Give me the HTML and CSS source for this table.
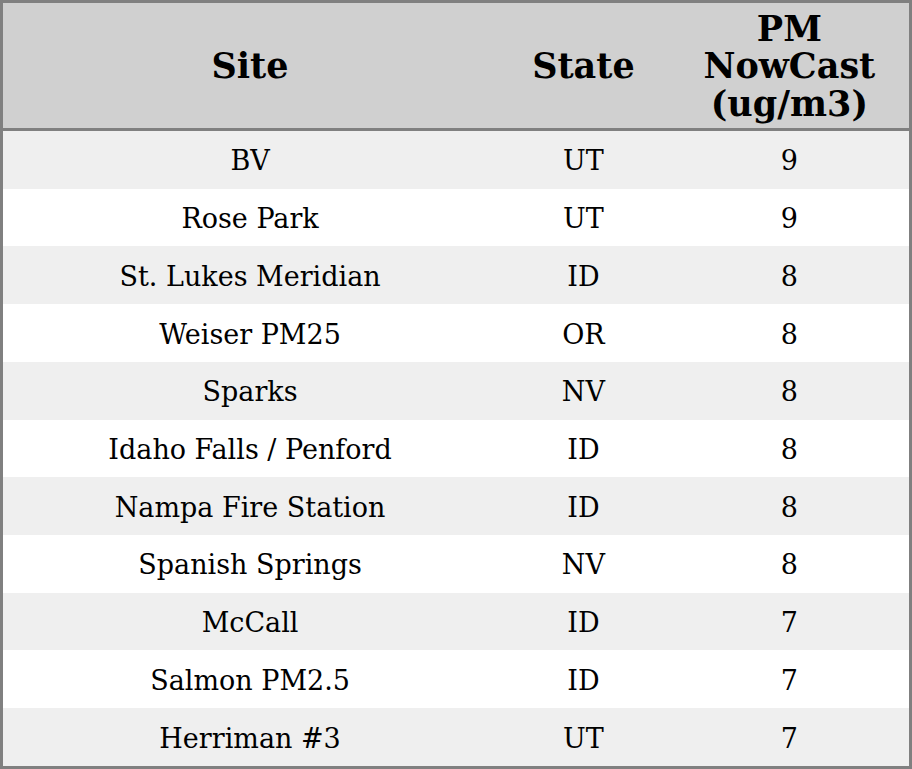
FILE: index.html
```html
<!DOCTYPE html>
<html>
<head>
<meta charset="utf-8">
<link rel="stylesheet" href="styles.css">
</head>
<body>
<table class="data">
  <colgroup>
    <col class="c-site">
    <col class="c-state">
    <col class="c-pm">
  </colgroup>
  <thead>
    <tr><th>Site</th><th>State</th><th>PM<br>NowCast<br>(ug/m3)</th></tr>
  </thead>
  <tbody>
    <tr><td>BV</td><td>UT</td><td>9</td></tr>
    <tr><td>Rose Park</td><td>UT</td><td>9</td></tr>
    <tr><td>St. Lukes Meridian</td><td>ID</td><td>8</td></tr>
    <tr><td>Weiser PM25</td><td>OR</td><td>8</td></tr>
    <tr><td>Sparks</td><td>NV</td><td>8</td></tr>
    <tr><td>Idaho Falls / Penford</td><td>ID</td><td>8</td></tr>
    <tr><td>Nampa Fire Station</td><td>ID</td><td>8</td></tr>
    <tr><td>Spanish Springs</td><td>NV</td><td>8</td></tr>
    <tr><td>McCall</td><td>ID</td><td>7</td></tr>
    <tr><td>Salmon PM2.5</td><td>ID</td><td>7</td></tr>
    <tr><td>Herriman #3</td><td>UT</td><td>7</td></tr>
  </tbody>
</table>
</body>
</html>
```
FILE: styles.css
```css
html, body {
  margin: 0;
  padding: 0;
  background: #ffffff;
}
.data {
  width: 912px;
  height: 769px;
  border-collapse: collapse;
  border: 3px solid #808080;
  font-family: "DejaVu Serif", serif;
  color: #000;
  table-layout: fixed;
}
.c-site { width: 494px; }
.c-state { width: 172px; }
.c-pm { width: 240px; }
.data th {
  background: #d0d0d0;
  font-weight: bold;
  font-size: 35px;
  line-height: 37.5px;
  height: 124px;
  padding: 1px 0 0 0;
  text-align: center;
  vertical-align: middle;
  border-bottom: 3px solid #808080;
}
.data td {
  font-size: 27px;
  line-height: 32px;
  height: 54.7px;
  padding: 3px 0 0 0;
  text-align: center;
  vertical-align: middle;
}
.data tbody tr:nth-child(odd) td {
  background: #efefef;
}
```
